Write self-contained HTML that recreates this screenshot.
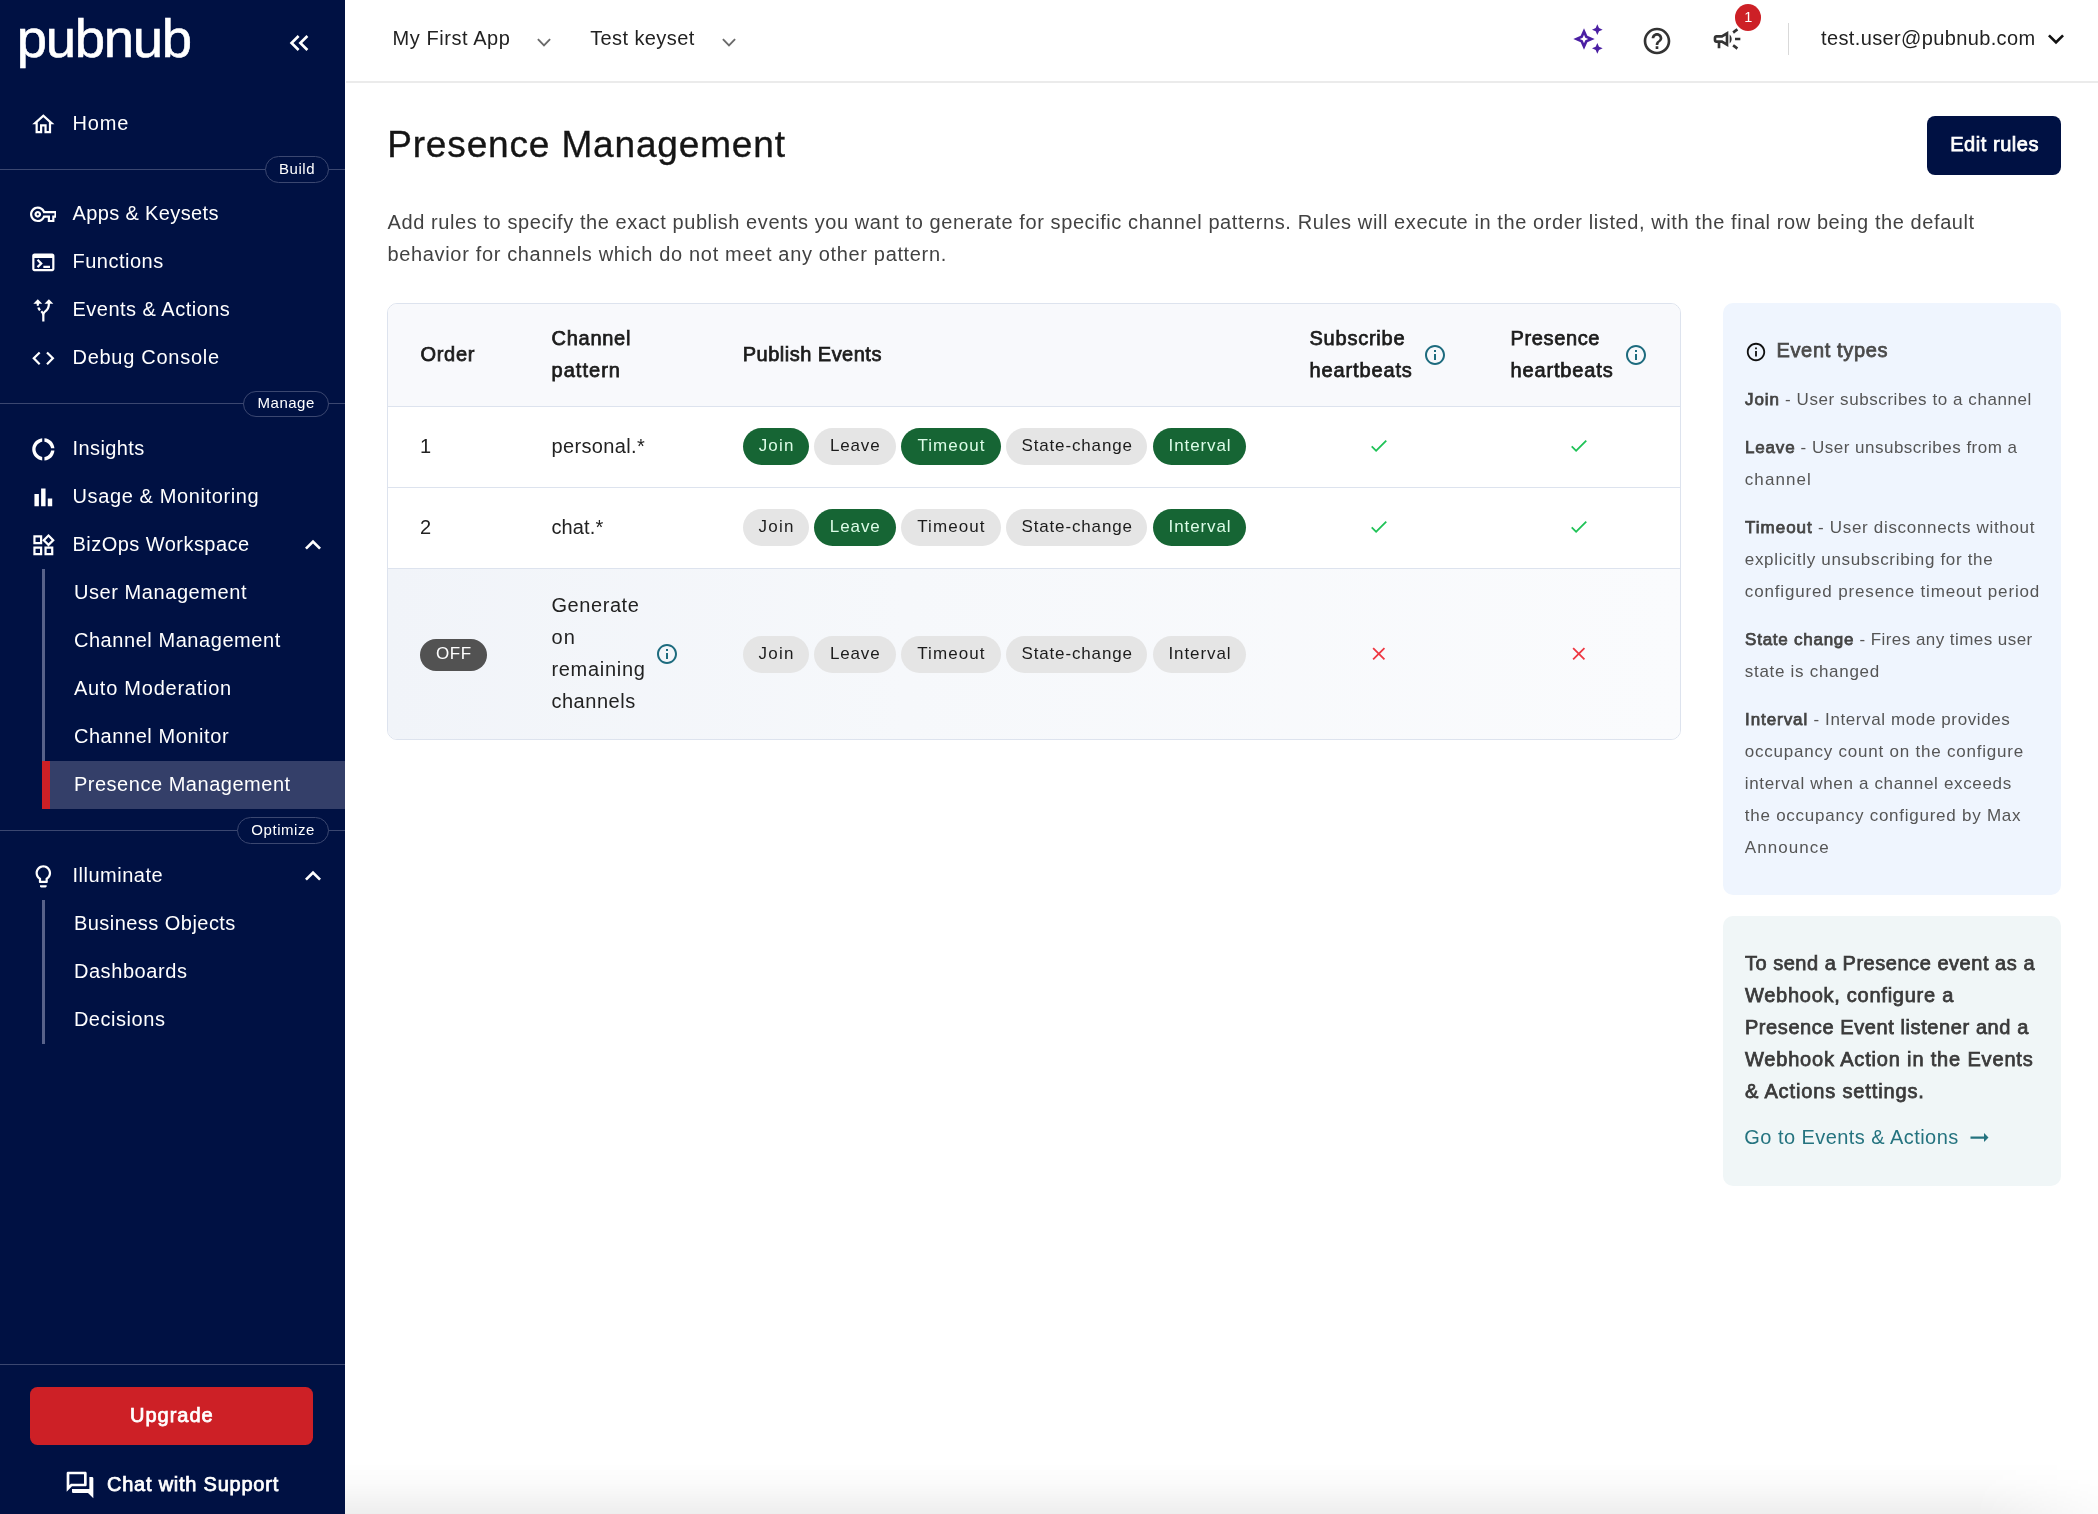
<!DOCTYPE html><html lang="en"><head><meta charset="utf-8"><title>Presence Management</title><style>
html,body{margin:0;padding:0}body{width:2098px;height:1514px;position:relative;overflow:hidden;background:#fff;font-family:"Liberation Sans", sans-serif}
.t{position:absolute;white-space:nowrap;line-height:1;font-kerning:normal}
</style></head><body>
<div style="position:absolute;left:0px;top:0px;width:345px;height:1514px;background:#001143;"></div>
<svg style="position:absolute;left:283.00px;top:26.90px" width="32" height="32" viewBox="0 0 24 24"><path fill="#fff" d="M17.59 18L19 16.59 14.42 12 19 7.41 17.59 6l-6 6zM11 18l1.41-1.41L7.83 12l4.58-4.59L11 6l-6 6z"/></svg>
<svg style="position:absolute;left:29.66px;top:111.37px" width="26.67" height="26.67" viewBox="0 0 24 24"><path fill="#fff" d="M12 5.69l5 4.5V18h-2v-6H9v6H7v-7.81l5-4.5M12 3L2 12h3v8h6v-6h2v6h6v-8h3L12 3z"/></svg>
<div style="position:absolute;left:0px;top:169px;width:345px;height:1px;background:#3b4770;"></div>
<div style="position:absolute;left:265px;top:156px;width:63.69999999999999px;height:27px;box-sizing:border-box;border:1px solid #3b4770;border-radius:13.5px;background:#001143"></div>
<svg style="position:absolute;left:29.66px;top:200.96px" width="26.67" height="26.67" viewBox="0 0 24 24"><path fill="#fff" d="M22 19h-6v-4h-2.68c-1.14 2.42-3.6 4-6.32 4-3.86 0-7-3.14-7-7s3.14-7 7-7c2.72 0 5.17 1.58 6.32 4H24v6h-2v4zm-4-2h2v-4h2v-2H11.94l-.23-.67C11.01 8.34 9.11 7 7 7c-2.76 0-5 2.24-5 5s2.24 5 5 5c2.11 0 4.01-1.34 4.71-3.33l.23-.67H18v4zM7 15c-1.65 0-3-1.35-3-3s1.35-3 3-3 3 1.35 3 3-1.35 3-3 3zm0-4c-.55 0-1 .45-1 1s.45 1 1 1 1-.45 1-1-.45-1-1-1z"/></svg>
<svg style="position:absolute;left:29.66px;top:248.56px" width="26.67" height="26.67" viewBox="0 0 24 24"><path fill="#fff" d="M20 4H4c-1.11 0-2 .9-2 2v12c0 1.1.89 2 2 2h16c1.1 0 2-.9 2-2V6c0-1.1-.89-2-2-2zm0 14H4V8h16v10zm-2-1h-6v-2h6v2zM7.5 17l-1.41-1.41L8.67 13l-2.59-2.59L7.5 9l4 4-4 4z"/></svg>
<svg style="position:absolute;left:29.66px;top:296.56px" width="26.67" height="26.67" viewBox="0 0 24 24"><path fill="#fff" d="M9.78 11.16l-1.42 1.42c-.68-.69-1.34-1.58-1.79-2.94l1.94-.49c.32.89.77 1.5 1.27 2.01zM11 6L7 2 3 6h3.02c.02.81.08 1.54.19 2.17l1.94-.49C8.08 7.2 8.03 6.63 8.02 6H11zm10 0l-4-4-4 4h2.99c-.1 3.68-1.28 4.75-2.54 5.88-.5.44-1.01.92-1.45 1.55-.34-.49-.73-.88-1.13-1.24L9.46 13.6c.93.85 1.54 1.54 1.54 3.4v5h2v-5c0-2.02.71-2.66 1.79-3.63 1.38-1.24 3.08-2.78 3.2-7.37H21z"/></svg>
<svg style="position:absolute;left:29.66px;top:344.67px" width="26.67" height="26.67" viewBox="0 0 24 24"><path fill="#fff" d="M9.4 16.6L4.8 12l4.6-4.6L8 6l-6 6 6 6 1.4-1.4zm5.2 0l4.6-4.6-4.6-4.6L16 6l6 6-6 6-1.4-1.4z"/></svg>
<div style="position:absolute;left:0px;top:403px;width:345px;height:1px;background:#3b4770;"></div>
<div style="position:absolute;left:243px;top:391px;width:85.69999999999999px;height:26px;box-sizing:border-box;border:1px solid #3b4770;border-radius:13.0px;background:#001143"></div>
<svg style="position:absolute;left:29.66px;top:436.37px" width="26.67" height="26.67" viewBox="0 0 24 24"><path fill="#fff" d="M11 5.08V2c-5 .5-9 4.81-9 10s4 9.5 9 10v-3.08c-3-.48-6-3.4-6-6.92s3-6.44 6-6.92zM18.97 11H22c-.47-5-4-8.53-9-9v3.08C16 5.51 18.54 8 18.97 11zM13 18.92V22c5-.47 8.53-4 9-9h-3.03c-.43 3-2.97 5.49-5.97 5.92z"/></svg>
<svg style="position:absolute;left:29.66px;top:483.56px" width="26.67" height="26.67" viewBox="0 0 24 24"><path fill="#fff" d="M4 9h4v11H4zm12 4h4v7h-4zm-6-9h4v16h-4z"/></svg>
<svg style="position:absolute;left:29.66px;top:531.57px" width="26.67" height="26.67" viewBox="0 0 24 24"><path fill="#fff" d="M16.66 4.52l2.83 2.83-2.83 2.83-2.83-2.83 2.83-2.83M9 5v4H5V5h4m10 10v4h-4v-4h4M9 15v4H5v-4h4m7.66-13.31L11 7.34 16.66 13l5.66-5.66-5.66-5.65zM11 3H3v8h8V3zm10 10h-8v8h8v-8zm-10 0H3v8h8v-8z"/></svg>
<svg style="position:absolute;left:297.00px;top:528.50px" width="32" height="32" viewBox="0 0 24 24"><path fill="#fff" d="M12 8l-6 6 1.41 1.41L12 10.83l4.59 4.58L18 14z"/></svg>
<div style="position:absolute;left:42px;top:569px;width:3px;height:192px;background:#58628a;"></div>
<div style="position:absolute;left:42px;top:761px;width:303px;height:47.5px;background:#343f69;"></div>
<div style="position:absolute;left:42px;top:761px;width:8px;height:47.5px;background:#cd2026;"></div>
<div style="position:absolute;left:0px;top:830px;width:345px;height:1px;background:#3b4770;"></div>
<div style="position:absolute;left:236.7px;top:817px;width:92.0px;height:27px;box-sizing:border-box;border:1px solid #3b4770;border-radius:13.5px;background:#001143"></div>
<svg style="position:absolute;left:29.66px;top:863.37px" width="26.67" height="26.67" viewBox="0 0 24 24"><path fill="#fff" d="M9 21c0 .55.45 1 1 1h4c.55 0 1-.45 1-1v-1H9v1zm3-19C8.14 2 5 5.14 5 9c0 2.38 1.19 4.47 3 5.74V17c0 .55.45 1 1 1h6c.55 0 1-.45 1-1v-2.26c1.81-1.27 3-3.36 3-5.74 0-3.86-3.14-7-7-7zm2.85 11.1l-.85.6V16h-4v-2.3l-.85-.6C7.8 12.16 7 10.63 7 9c0-2.76 2.24-5 5-5s5 2.24 5 5c0 1.63-.8 3.16-2.15 4.1z"/></svg>
<svg style="position:absolute;left:297.00px;top:859.50px" width="32" height="32" viewBox="0 0 24 24"><path fill="#fff" d="M12 8l-6 6 1.41 1.41L12 10.83l4.59 4.58L18 14z"/></svg>
<div style="position:absolute;left:42px;top:900px;width:3px;height:144px;background:#58628a;"></div>
<div style="position:absolute;left:0px;top:1364px;width:345px;height:1px;background:#3b4770;"></div>
<div style="position:absolute;left:30px;top:1387px;width:283px;height:58px;border-radius:7.5px;background:#cd2026"></div>
<svg style="position:absolute;left:64.00px;top:1468.60px" width="32" height="32" viewBox="0 0 24 24"><path fill="#fff" d="M15 4v7H5.17L4 12.17V4h11m1-2H3c-.55 0-1 .45-1 1v14l4-4h10c.55 0 1-.45 1-1V3c0-.55-.45-1-1-1zm5 4h-2v9H6v2c0 .55.45 1 1 1h11l4 4V7c0-.55-.45-1-1-1z"/></svg>
<div style="position:absolute;left:346px;top:81px;width:1752px;height:2px;background:#ebebeb;"></div>
<svg style="position:absolute;left:534.3px;top:32px" width="20" height="20" viewBox="0 0 20 20"><path d="M3.9 7.2 L10 13.3 L16.1 7.2" fill="none" stroke="#6a6a6a" stroke-width="1.9"/></svg>
<svg style="position:absolute;left:719.3px;top:32px" width="20" height="20" viewBox="0 0 20 20"><path d="M3.9 7.2 L10 13.3 L16.1 7.2" fill="none" stroke="#6a6a6a" stroke-width="1.9"/></svg>
<svg style="position:absolute;left:1571.60px;top:22.90px" width="32" height="32" viewBox="0 0 24 24"><path fill="#4b1fa3" d="M19 9l1.25-2.75L23 5l-2.75-1.25L19 1l-1.25 2.75L15 5l2.75 1.25zm0 6l-1.25 2.75L15 19l2.75 1.25L19 23l1.25-2.75L23 19l-2.75-1.25zm-7.5-5.5L9 4 6.5 9.5 1 12l5.5 2.5L9 20l2.5-5.5L17 12l-5.5-2.5zm-1.51 3.49L9 15.17l-.99-2.18L5.83 12l2.18-.99L9 8.83l.99 2.18 2.18.99-2.18.99z"/></svg>
<svg style="position:absolute;left:1641.00px;top:25.00px" width="32" height="32" viewBox="0 0 24 24"><path fill="#333" d="M11 18h2v-2h-2v2zm1-16C6.48 2 2 6.48 2 12s4.48 10 10 10 10-4.48 10-10S17.52 2 12 2zm0 18c-4.41 0-8-3.59-8-8s3.59-8 8-8 8 3.59 8 8-3.59 8-8 8zm0-14c-2.21 0-4 1.79-4 4h2c0-1.1.9-2 2-2s2 .9 2 2c0 2-3 1.75-3 5h2c0-2.25 3-2.5 3-5 0-2.21-1.79-4-4-4z"/></svg>
<svg style="position:absolute;left:1710.70px;top:23.00px" width="32" height="32" viewBox="0 0 24 24"><path fill="#333" d="M18 11v2h4v-2h-4zm-2 6.61c.96.71 2.21 1.65 3.2 2.39.4-.53.8-1.07 1.2-1.6-.99-.74-2.24-1.68-3.2-2.4-.4.54-.8 1.08-1.2 1.61zM20.4 5.6c-.4-.53-.8-1.07-1.2-1.6-.99.74-2.24 1.68-3.2 2.4.4.53.8 1.07 1.2 1.6.96-.72 2.21-1.65 3.2-2.4zM4 9c-1.1 0-2 .9-2 2v2c0 1.1.9 2 2 2h1v4h2v-4h1l5 3V6L8 9H4zm5.03 1.71L11 9.53v4.94l-1.97-1.18-.48-.29H4v-2h4.55l.48-.29zM15.5 12c0-1.33-.58-2.53-1.5-3.35v6.69c.92-.81 1.5-2.01 1.5-3.34z"/></svg>
<div style="position:absolute;left:1735px;top:4px;width:26px;height:26.5px;border-radius:50%;background:#cd2026"></div>
<div style="position:absolute;left:1788px;top:23px;width:1px;height:32px;background:#d9d9d9;"></div>
<svg style="position:absolute;left:2040.00px;top:22.60px" width="32" height="32" viewBox="0 0 24 24"><path fill="#111" d="M16.59 8.59L12 13.17 7.41 8.59 6 10l6 6 6-6z"/></svg>
<div style="position:absolute;left:1927px;top:116px;width:134px;height:59px;border-radius:8px;background:#001143"></div>
<div style="position:absolute;left:387px;top:303px;width:1294px;height:437px;box-sizing:border-box;border:1px solid #dde3ee;border-radius:10px;background:#fff;overflow:hidden">
<div style="position:absolute;left:0;top:0;width:100%;height:102px;background:#f8f9fc;border-bottom:1px solid #dde3ee"></div>
<div style="position:absolute;left:0;top:183px;width:100%;height:1px;background:#dde3ee"></div>
<div style="position:absolute;left:0;top:264px;width:100%;height:1px;background:#dde3ee"></div>
<div style="position:absolute;left:0;top:265px;width:100%;height:172px;background:linear-gradient(90deg,#f1f4f9 0%,#f6f8fb 40%,#fafbfd 100%)"></div>
</div>
<svg style="position:absolute;left:1423.00px;top:343.00px" width="24" height="24" viewBox="0 0 24 24"><path fill="#1d6b7e" d="M11 7h2v2h-2zm0 4h2v6h-2zm1-9C6.48 2 2 6.48 2 12s4.48 10 10 10 10-4.48 10-10S17.52 2 12 2zm0 18c-4.41 0-8-3.59-8-8s3.59-8 8-8 8 3.59 8 8-3.59 8-8 8z"/></svg>
<svg style="position:absolute;left:1624.00px;top:343.00px" width="24" height="24" viewBox="0 0 24 24"><path fill="#1d6b7e" d="M11 7h2v2h-2zm0 4h2v6h-2zm1-9C6.48 2 2 6.48 2 12s4.48 10 10 10 10-4.48 10-10S17.52 2 12 2zm0 18c-4.41 0-8-3.59-8-8s3.59-8 8-8 8 3.59 8 8-3.59 8-8 8z"/></svg>
<div style="position:absolute;left:743px;top:428px;width:65.79999999999995px;height:37px;border-radius:18.5px;background:#166534"></div>
<div style="position:absolute;left:814.1px;top:428px;width:81.89999999999998px;height:37px;border-radius:18.5px;background:#e5e5e5"></div>
<div style="position:absolute;left:901px;top:428px;width:99.79999999999995px;height:37px;border-radius:18.5px;background:#166534"></div>
<div style="position:absolute;left:1006.1px;top:428px;width:140.4999999999999px;height:37px;border-radius:18.5px;background:#e5e5e5"></div>
<div style="position:absolute;left:1153.2px;top:428px;width:92.79999999999995px;height:37px;border-radius:18.5px;background:#166534"></div>
<div style="position:absolute;left:743px;top:509px;width:65.79999999999995px;height:37px;border-radius:18.5px;background:#e5e5e5"></div>
<div style="position:absolute;left:814.1px;top:509px;width:81.89999999999998px;height:37px;border-radius:18.5px;background:#166534"></div>
<div style="position:absolute;left:901px;top:509px;width:99.79999999999995px;height:37px;border-radius:18.5px;background:#e5e5e5"></div>
<div style="position:absolute;left:1006.1px;top:509px;width:140.4999999999999px;height:37px;border-radius:18.5px;background:#e5e5e5"></div>
<div style="position:absolute;left:1153.2px;top:509px;width:92.79999999999995px;height:37px;border-radius:18.5px;background:#166534"></div>
<div style="position:absolute;left:743px;top:635.5px;width:65.79999999999995px;height:37px;border-radius:18.5px;background:#e5e5e5"></div>
<div style="position:absolute;left:814.1px;top:635.5px;width:81.89999999999998px;height:37px;border-radius:18.5px;background:#e5e5e5"></div>
<div style="position:absolute;left:901px;top:635.5px;width:99.79999999999995px;height:37px;border-radius:18.5px;background:#e5e5e5"></div>
<div style="position:absolute;left:1006.1px;top:635.5px;width:140.4999999999999px;height:37px;border-radius:18.5px;background:#e5e5e5"></div>
<div style="position:absolute;left:1153.2px;top:635.5px;width:92.79999999999995px;height:37px;border-radius:18.5px;background:#e5e5e5"></div>
<svg style="position:absolute;left:1368.00px;top:435.20px" width="21.6" height="21.6" viewBox="0 0 24 24"><path fill="#1fc257" d="M9 16.17L4.83 12l-1.42 1.41L9 19 21 7l-1.41-1.41z"/></svg>
<svg style="position:absolute;left:1568.00px;top:435.20px" width="21.6" height="21.6" viewBox="0 0 24 24"><path fill="#1fc257" d="M9 16.17L4.83 12l-1.42 1.41L9 19 21 7l-1.41-1.41z"/></svg>
<svg style="position:absolute;left:1368.00px;top:516.30px" width="21.6" height="21.6" viewBox="0 0 24 24"><path fill="#1fc257" d="M9 16.17L4.83 12l-1.42 1.41L9 19 21 7l-1.41-1.41z"/></svg>
<svg style="position:absolute;left:1568.00px;top:516.30px" width="21.6" height="21.6" viewBox="0 0 24 24"><path fill="#1fc257" d="M9 16.17L4.83 12l-1.42 1.41L9 19 21 7l-1.41-1.41z"/></svg>
<svg style="position:absolute;left:1367.75px;top:642.80px" width="21.6" height="21.6" viewBox="0 0 24 24"><path fill="#ee3742" d="M19 6.41L17.59 5 12 10.59 6.41 5 5 6.41 10.59 12 5 17.59 6.41 19 12 13.41 17.59 19 19 17.59 13.41 12z"/></svg>
<svg style="position:absolute;left:1567.75px;top:642.80px" width="21.6" height="21.6" viewBox="0 0 24 24"><path fill="#ee3742" d="M19 6.41L17.59 5 12 10.59 6.41 5 5 6.41 10.59 12 5 17.59 6.41 19 12 13.41 17.59 19 19 17.59 13.41 12z"/></svg>
<div style="position:absolute;left:420px;top:639px;width:67px;height:32px;border-radius:16px;background:#525252"></div>
<svg style="position:absolute;left:654.90px;top:642.10px" width="24" height="24" viewBox="0 0 24 24"><path fill="#1d6b7e" d="M11 7h2v2h-2zm0 4h2v6h-2zm1-9C6.48 2 2 6.48 2 12s4.48 10 10 10 10-4.48 10-10S17.52 2 12 2zm0 18c-4.41 0-8-3.59-8-8s3.59-8 8-8 8 3.59 8 8-3.59 8-8 8z"/></svg>
<div style="position:absolute;left:1723px;top:303px;width:338px;height:592px;border-radius:10px;background:#eff5fe"></div>
<svg style="position:absolute;left:1744.50px;top:341.00px" width="22" height="22" viewBox="0 0 24 24"><path fill="#111" d="M11 7h2v2h-2zm0 4h2v6h-2zm1-9C6.48 2 2 6.48 2 12s4.48 10 10 10 10-4.48 10-10S17.52 2 12 2zm0 18c-4.41 0-8-3.59-8-8s3.59-8 8-8 8 3.59 8 8-3.59 8-8 8z"/></svg>
<div style="position:absolute;left:1723px;top:916px;width:338px;height:270px;border-radius:10px;background:#f0f6f7"></div>
<svg style="position:absolute;left:1966.00px;top:1124.20px" width="27" height="27" viewBox="0 0 24 24"><path fill="#24737f" d="M16.01 11H4v2h12.01v3L20 12l-3.99-4z"/></svg>
<div style="position:absolute;left:345px;top:1462px;width:1753px;height:52px;background:linear-gradient(180deg,rgba(0,0,0,0) 0%,rgba(0,0,0,0.015) 40%,rgba(0,0,0,0.065) 100%);-webkit-mask-image:linear-gradient(90deg,#000 0%,#000 93%,rgba(0,0,0,0.25) 100%);mask-image:linear-gradient(90deg,#000 0%,#000 93%,rgba(0,0,0,0.25) 100%)"></div>
<div id="tx" style="position:absolute;left:0;top:0;width:2098px;height:1514px;will-change:transform">
<span class="t" id="t0" style="left:16.72px;top:12px;font-size:54.5px;color:#fff;letter-spacing:-1.281px;-webkit-text-stroke:0.6px #fff;">pubnub</span>
<span class="t" id="t1" style="left:72.50px;top:113px;font-size:20px;color:#fff;letter-spacing:0.828px;">Home</span>
<span class="t" id="t2" style="left:279.01px;top:161px;font-size:15px;color:#fff;letter-spacing:0.529px;">Build</span>
<span class="t" id="t3" style="left:72.50px;top:203px;font-size:20px;color:#fff;letter-spacing:0.366px;">Apps &amp; Keysets</span>
<span class="t" id="t4" style="left:72.50px;top:251px;font-size:20px;color:#fff;letter-spacing:0.503px;">Functions</span>
<span class="t" id="t5" style="left:72.50px;top:299px;font-size:20px;color:#fff;letter-spacing:0.486px;">Events &amp; Actions</span>
<span class="t" id="t6" style="left:72.50px;top:347px;font-size:20px;color:#fff;letter-spacing:0.721px;">Debug Console</span>
<span class="t" id="t7" style="left:257.49px;top:395px;font-size:15px;color:#fff;letter-spacing:0.528px;">Manage</span>
<span class="t" id="t8" style="left:72.50px;top:438px;font-size:20px;color:#fff;letter-spacing:0.399px;">Insights</span>
<span class="t" id="t9" style="left:72.50px;top:486px;font-size:20px;color:#fff;letter-spacing:0.616px;">Usage &amp; Monitoring</span>
<span class="t" id="t10" style="left:72.50px;top:534px;font-size:20px;color:#fff;letter-spacing:0.460px;">BizOps Workspace</span>
<span class="t" id="t11" style="left:73.90px;top:582px;font-size:20px;color:#fff;letter-spacing:0.578px;">User Management</span>
<span class="t" id="t12" style="left:73.90px;top:630px;font-size:20px;color:#fff;letter-spacing:0.563px;">Channel Management</span>
<span class="t" id="t13" style="left:73.90px;top:678px;font-size:20px;color:#fff;letter-spacing:0.752px;">Auto Moderation</span>
<span class="t" id="t14" style="left:73.90px;top:726px;font-size:20px;color:#fff;letter-spacing:0.565px;">Channel Monitor</span>
<span class="t" id="t15" style="left:73.90px;top:774px;font-size:20px;color:#fff;letter-spacing:0.526px;">Presence Management</span>
<span class="t" id="t16" style="left:251.30px;top:822px;font-size:15px;color:#fff;letter-spacing:0.552px;">Optimize</span>
<span class="t" id="t17" style="left:72.50px;top:865px;font-size:20px;color:#fff;letter-spacing:0.500px;">Illuminate</span>
<span class="t" id="t18" style="left:73.90px;top:913px;font-size:20px;color:#fff;letter-spacing:0.464px;">Business Objects</span>
<span class="t" id="t19" style="left:73.90px;top:961px;font-size:20px;color:#fff;letter-spacing:0.575px;">Dashboards</span>
<span class="t" id="t20" style="left:73.90px;top:1009px;font-size:20px;color:#fff;letter-spacing:0.541px;">Decisions</span>
<span class="t" id="t21" style="left:130.08px;top:1405px;font-size:20px;color:#fff;-webkit-text-stroke:0.75px #fff;letter-spacing:0.969px;">Upgrade</span>
<span class="t" id="t22" style="left:107.03px;top:1474px;font-size:20px;color:#fff;-webkit-text-stroke:0.75px #fff;letter-spacing:0.764px;">Chat with Support</span>
<span class="t" id="t23" style="left:392.47px;top:28px;font-size:20px;color:#222;letter-spacing:0.570px;">My First App</span>
<span class="t" id="t24" style="left:590.17px;top:28px;font-size:20px;color:#222;letter-spacing:0.405px;">Test keyset</span>
<span class="t" id="t25" style="left:1744.26px;top:10px;font-size:14.5px;color:#fff;">1</span>
<span class="t" id="t26" style="left:1821.09px;top:28px;font-size:20px;color:#222;letter-spacing:0.366px;">test.user@pubnub.com</span>
<span class="t" id="t27" style="left:387.17px;top:126px;font-size:37px;color:#151515;letter-spacing:0.848px;-webkit-text-stroke:0.35px #151515;">Presence Management</span>
<span class="t" id="t28" style="left:1950.21px;top:134px;font-size:20px;color:#fff;-webkit-text-stroke:0.75px #fff;letter-spacing:0.542px;">Edit rules</span>
<span class="t" id="t29" style="left:387.50px;top:212px;font-size:20px;color:#424242;letter-spacing:0.586px;">Add rules to specify the exact publish events you want to generate for specific channel patterns. Rules will execute in the order listed, with the final row being the default</span>
<span class="t" id="t30" style="left:387.50px;top:244px;font-size:20px;color:#424242;letter-spacing:0.655px;">behavior for channels which do not meet any other pattern.</span>
<span class="t" id="t31" style="left:420.40px;top:344px;font-size:20px;color:#1c1c1c;-webkit-text-stroke:0.75px #1c1c1c;letter-spacing:0.736px;">Order</span>
<span class="t" id="t32" style="left:551.60px;top:328px;font-size:20px;color:#1c1c1c;-webkit-text-stroke:0.75px #1c1c1c;letter-spacing:0.714px;">Channel</span>
<span class="t" id="t33" style="left:551.60px;top:360px;font-size:20px;color:#1c1c1c;-webkit-text-stroke:0.75px #1c1c1c;letter-spacing:1.012px;">pattern</span>
<span class="t" id="t34" style="left:742.75px;top:344px;font-size:20px;color:#1c1c1c;-webkit-text-stroke:0.75px #1c1c1c;letter-spacing:0.487px;">Publish Events</span>
<span class="t" id="t35" style="left:1309.50px;top:328px;font-size:20px;color:#1c1c1c;-webkit-text-stroke:0.75px #1c1c1c;letter-spacing:0.767px;">Subscribe</span>
<span class="t" id="t36" style="left:1309.50px;top:360px;font-size:20px;color:#1c1c1c;-webkit-text-stroke:0.75px #1c1c1c;letter-spacing:0.873px;">heartbeats</span>
<span class="t" id="t37" style="left:1510.60px;top:328px;font-size:20px;color:#1c1c1c;-webkit-text-stroke:0.75px #1c1c1c;letter-spacing:0.626px;">Presence</span>
<span class="t" id="t38" style="left:1510.60px;top:360px;font-size:20px;color:#1c1c1c;-webkit-text-stroke:0.75px #1c1c1c;letter-spacing:0.836px;">heartbeats</span>
<span class="t" id="t39" style="left:419.90px;top:436px;font-size:20px;color:#222;">1</span>
<span class="t" id="t40" style="left:551.40px;top:436px;font-size:20px;color:#222;letter-spacing:0.370px;">personal.*</span>
<span class="t" id="t41" style="left:420.00px;top:517px;font-size:20px;color:#222;">2</span>
<span class="t" id="t42" style="left:551.40px;top:517px;font-size:20px;color:#222;letter-spacing:0.127px;">chat.*</span>
<span class="t" id="t43" style="left:758.68px;top:437px;font-size:17px;color:#dcfce7;letter-spacing:1.191px;">Join</span>
<span class="t" id="t44" style="left:829.88px;top:437px;font-size:17px;color:#1c1c1c;letter-spacing:0.877px;">Leave</span>
<span class="t" id="t45" style="left:917.44px;top:437px;font-size:17px;color:#dcfce7;letter-spacing:1.050px;">Timeout</span>
<span class="t" id="t46" style="left:1021.51px;top:437px;font-size:17px;color:#1c1c1c;letter-spacing:0.846px;">State-change</span>
<span class="t" id="t47" style="left:1168.61px;top:437px;font-size:17px;color:#dcfce7;letter-spacing:0.890px;">Interval</span>
<span class="t" id="t48" style="left:758.49px;top:518px;font-size:17px;color:#1c1c1c;letter-spacing:1.246px;">Join</span>
<span class="t" id="t49" style="left:829.84px;top:518px;font-size:17px;color:#dcfce7;letter-spacing:0.913px;">Leave</span>
<span class="t" id="t50" style="left:917.24px;top:518px;font-size:17px;color:#1c1c1c;letter-spacing:1.089px;">Timeout</span>
<span class="t" id="t51" style="left:1021.51px;top:518px;font-size:17px;color:#1c1c1c;letter-spacing:0.846px;">State-change</span>
<span class="t" id="t52" style="left:1168.61px;top:518px;font-size:17px;color:#dcfce7;letter-spacing:0.890px;">Interval</span>
<span class="t" id="t53" style="left:758.49px;top:645px;font-size:17px;color:#1c1c1c;letter-spacing:1.246px;">Join</span>
<span class="t" id="t54" style="left:829.88px;top:645px;font-size:17px;color:#1c1c1c;letter-spacing:0.877px;">Leave</span>
<span class="t" id="t55" style="left:917.24px;top:645px;font-size:17px;color:#1c1c1c;letter-spacing:1.089px;">Timeout</span>
<span class="t" id="t56" style="left:1021.51px;top:645px;font-size:17px;color:#1c1c1c;letter-spacing:0.846px;">State-change</span>
<span class="t" id="t57" style="left:1168.44px;top:645px;font-size:17px;color:#1c1c1c;letter-spacing:0.913px;">Interval</span>
<span class="t" id="t58" style="left:436.01px;top:645px;font-size:17px;color:#fff;letter-spacing:0.623px;">OFF</span>
<span class="t" id="t59" style="left:551.40px;top:595px;font-size:20px;color:#222;letter-spacing:0.580px;">Generate</span>
<span class="t" id="t60" style="left:551.40px;top:627px;font-size:20px;color:#222;letter-spacing:1.144px;">on</span>
<span class="t" id="t61" style="left:551.40px;top:659px;font-size:20px;color:#222;letter-spacing:0.714px;">remaining</span>
<span class="t" id="t62" style="left:551.40px;top:691px;font-size:20px;color:#222;letter-spacing:0.545px;">channels</span>
<span class="t" id="t63" style="left:1776.49px;top:340px;font-size:20px;color:#4a4a4a;-webkit-text-stroke:0.75px #4a4a4a;letter-spacing:0.646px;">Event types</span>
<span class="t" id="t64" style="left:1745.10px;top:391px;font-size:17px;color:#555;letter-spacing:0.574px;"><b style="color:#444;font-weight:400;-webkit-text-stroke:0.75px #444;letter-spacing:0.874px">Join</b> - User subscribes to a channel</span>
<span class="t" id="t65" style="left:1745.10px;top:439px;font-size:17px;color:#555;letter-spacing:0.494px;"><b style="color:#444;font-weight:400;-webkit-text-stroke:0.75px #444;letter-spacing:0.794px">Leave</b> - User unsubscribes from a</span>
<span class="t" id="t66" style="left:1744.80px;top:471px;font-size:17px;color:#555;letter-spacing:1.066px;">channel</span>
<span class="t" id="t67" style="left:1745.10px;top:519px;font-size:17px;color:#555;letter-spacing:0.677px;"><b style="color:#444;font-weight:400;-webkit-text-stroke:0.75px #444;letter-spacing:0.977px">Timeout</b> - User disconnects without</span>
<span class="t" id="t68" style="left:1744.80px;top:551px;font-size:17px;color:#555;letter-spacing:0.682px;">explicitly unsubscribing for the</span>
<span class="t" id="t69" style="left:1744.80px;top:583px;font-size:17px;color:#555;letter-spacing:0.848px;">configured presence timeout period</span>
<span class="t" id="t70" style="left:1745.10px;top:631px;font-size:17px;color:#555;letter-spacing:0.447px;"><b style="color:#444;font-weight:400;-webkit-text-stroke:0.75px #444;letter-spacing:0.747px">State change</b> - Fires any times user</span>
<span class="t" id="t71" style="left:1744.80px;top:663px;font-size:17px;color:#555;letter-spacing:0.705px;">state is changed</span>
<span class="t" id="t72" style="left:1745.10px;top:711px;font-size:17px;color:#555;letter-spacing:0.609px;"><b style="color:#444;font-weight:400;-webkit-text-stroke:0.75px #444;letter-spacing:0.909px">Interval</b> - Interval mode provides</span>
<span class="t" id="t73" style="left:1744.80px;top:743px;font-size:17px;color:#555;letter-spacing:0.776px;">occupancy count on the configure</span>
<span class="t" id="t74" style="left:1744.80px;top:775px;font-size:17px;color:#555;letter-spacing:0.657px;">interval when a channel exceeds</span>
<span class="t" id="t75" style="left:1744.80px;top:807px;font-size:17px;color:#555;letter-spacing:0.749px;">the occupancy configured by Max</span>
<span class="t" id="t76" style="left:1744.80px;top:839px;font-size:17px;color:#555;letter-spacing:1.054px;">Announce</span>
<span class="t" id="t77" style="left:1744.90px;top:953px;font-size:20px;color:#3a3a3a;-webkit-text-stroke:0.75px #3a3a3a;letter-spacing:0.536px;">To send a Presence event as a</span>
<span class="t" id="t78" style="left:1744.90px;top:985px;font-size:20px;color:#3a3a3a;-webkit-text-stroke:0.75px #3a3a3a;letter-spacing:0.746px;">Webhook, configure a</span>
<span class="t" id="t79" style="left:1744.90px;top:1017px;font-size:20px;color:#3a3a3a;-webkit-text-stroke:0.75px #3a3a3a;letter-spacing:0.593px;">Presence Event listener and a</span>
<span class="t" id="t80" style="left:1744.90px;top:1049px;font-size:20px;color:#3a3a3a;-webkit-text-stroke:0.75px #3a3a3a;letter-spacing:0.833px;">Webhook Action in the Events</span>
<span class="t" id="t81" style="left:1744.90px;top:1081px;font-size:20px;color:#3a3a3a;-webkit-text-stroke:0.75px #3a3a3a;letter-spacing:0.867px;">&amp; Actions settings.</span>
<span class="t" id="t82" style="left:1744.30px;top:1127px;font-size:20px;color:#24737f;letter-spacing:0.448px;">Go to Events &amp; Actions</span>
</div>
</body></html>
